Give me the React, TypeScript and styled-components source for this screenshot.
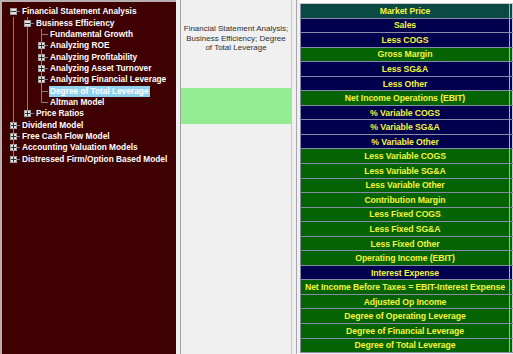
import styled, { createGlobalStyle } from "styled-components"

type Node = { level: number; label: string; box?: "plus" | "minus"; selected?: boolean }

const tree: Node[] = [
    { level: 0, label: "Financial Statement Analysis", box: "minus" },
    { level: 1, label: "Business Efficiency", box: "minus" },
    { level: 2, label: "Fundamental Growth" },
    { level: 2, label: "Analyzing ROE", box: "plus" },
    { level: 2, label: "Analyzing Profitability", box: "plus" },
    { level: 2, label: "Analyzing Asset Turnover", box: "plus" },
    { level: 2, label: "Analyzing Financial Leverage", box: "plus" },
    { level: 2, label: "Degree of Total Leverage", selected: true },
    { level: 2, label: "Altman Model" },
    { level: 1, label: "Price Ratios", box: "plus" },
    { level: 0, label: "Dividend Model", box: "plus" },
    { level: 0, label: "Free Cash Flow Model", box: "plus" },
    { level: 0, label: "Accounting Valuation Models", box: "plus" },
    { level: 0, label: "Distressed Firm/Option Based Model", box: "plus" },
]

type Tone = "teal" | "navy" | "green"

const rows: { label: string; tone: Tone }[] = [
    { label: "Market Price", tone: "teal" },
    { label: "Sales", tone: "navy" },
    { label: "Less COGS", tone: "navy" },
    { label: "Gross Margin", tone: "green" },
    { label: "Less SG&A", tone: "navy" },
    { label: "Less Other", tone: "navy" },
    { label: "Net Income Operations (EBIT)", tone: "green" },
    { label: "% Variable COGS", tone: "navy" },
    { label: "% Variable SG&A", tone: "navy" },
    { label: "% Variable Other", tone: "navy" },
    { label: "Less Variable COGS", tone: "green" },
    { label: "Less Variable SG&A", tone: "green" },
    { label: "Less Variable Other", tone: "green" },
    { label: "Contribution Margin", tone: "green" },
    { label: "Less Fixed COGS", tone: "green" },
    { label: "Less Fixed SG&A", tone: "green" },
    { label: "Less Fixed Other", tone: "green" },
    { label: "Operating Income (EBIT)", tone: "green" },
    { label: "Interest Expense", tone: "navy" },
    { label: "Net Income Before Taxes = EBIT-Interest Expense", tone: "green" },
    { label: "Adjusted Op Income", tone: "green" },
    { label: "Degree of Operating Leverage", tone: "green" },
    { label: "Degree of Financial Leverage", tone: "green" },
    { label: "Degree of Total Leverage", tone: "green" },
]

const toneBg: Record<Tone, string> = {
    teal: "#0b4a42",
    navy: "#00004e",
    green: "#046404",
}

// does the node at index i have a later sibling?
const hasNext = (i: number) => {
    const lvl = tree[i].level
    for (let j = i + 1; j < tree.length; j++) {
        if (tree[j].level < lvl) return false
        if (tree[j].level === lvl) return true
    }
    return false
}

const guideFor = (i: number, level: number) => {
    for (let j = i - 1; j >= 0; j--) {
        if (tree[j].level === level) return hasNext(j)
    }
    return false
}

const GlobalStyle = createGlobalStyle`
  html, body { margin: 0; padding: 0; background: #f0f0f0; }
  * { box-sizing: border-box; }
`

const Window = styled.div`
display: flex;
width: 513px;
height: 354px;
overflow: hidden;
background: #f0f0f0;
`

const TreePanel = styled.div`
width: 176px;
flex: none;
background: #3e0000;
border-top: 2px solid #b8b0b0;
border-left: 2px solid #b8b0b0;
padding: 4px 0 0 4px;
font-family: "Liberation Sans", Arial, sans-serif;
font-weight: bold;
font-size: 8.3px;
color: #ffffff;
`

const TreeRow = styled.div`
display: flex;
align-items: center;
height: 11.35px;
`

const lineColor = "#8a7a7a"

const Guide = styled.span<{ $line: boolean }>`
width: 14px;
height: 100%;
flex: none;
background: ${(p) => (p.$line ? `linear-gradient(${lineColor}, ${lineColor}) no-repeat 7px 0 / 1px 100%` : "none")};
`

const Joint = styled.span<{ $first: boolean; $next: boolean }>`
width: 14px;
height: 100%;
flex: none;
display: flex;
align-items: center;
justify-content: center;
background:
  linear-gradient(${lineColor}, ${lineColor}) no-repeat 7px 50% / 7px 1px,
  linear-gradient(${lineColor}, ${lineColor}) no-repeat 7px ${(p) => (p.$first ? "50%" : "0")} / 1px ${(p) => (p.$first ? (p.$next ? "50%" : "0") : p.$next ? "100%" : "50%")};
`

const Expander = styled.span`
width: 7px;
height: 7px;
flex: none;
display: flex;
background: #e4e4e4;
border: 1px solid #a0a0a0;
margin-left: 1px;
`

const Label = styled.span<{ $selected?: boolean }>`
margin-left: 1px;
padding: 0 1px;
line-height: 11px;
white-space: nowrap;
background: ${(p) => (p.$selected ? "#8fd2f0" : "transparent")};
`

const Middle = styled.div`
width: 121px;
flex: none;
display: flex;
padding: 0 4px 0 4px;
border-right: 1px solid #a8a8a8;
`

const Frame = styled.div`
flex: 1;
display: flex;
flex-direction: column;
border-left: 1px solid #a0a0a0;
border-right: 1px solid #c8c8c8;
padding-top: 2px;
`

const Caption = styled.div`
height: 86px;
padding: 22px 2px 0;
text-align: center;
font-family: "Liberation Sans", Arial, sans-serif;
font-size: 8px;
line-height: 9.6px;
color: #2e2e2e;
`

const Swatch = styled.div`
height: 36px;
background: #92ec92;
`

const Grid = styled.div`
flex: 1;
display: flex;
flex-direction: column;
padding-left: 3px;
`

const TopStrip = styled.div`
height: 4px;
background: #ffffff;
border-bottom: 1px solid #c8c8d8;
`

const Row = styled.div`
display: flex;
height: 14.56px;
border-bottom: 1px solid #8a8aa8;
`

const Cell = styled.div<{ $tone: Tone }>`
flex: 1;
display: flex;
align-items: center;
justify-content: center;
background: ${(p) => toneBg[p.$tone]};
border-left: 1px solid #8a8aa8;
border-right: 1px solid #b8a8c8;
font-family: "Liberation Sans", Arial, sans-serif;
font-weight: bold;
font-size: 8.7px;
color: #f4f43a;
white-space: nowrap;
letter-spacing: -0.1px;
`

const Stub = styled.div<{ $tone: Tone }>`
width: 3px;
flex: none;
background: ${(p) => toneBg[p.$tone]};
border-right: 1px solid #c8c8d8;
`

const Sign = ({ kind }: { kind: "plus" | "minus" }) => (
    <svg width="5" height="5" viewBox="0 0 5 5">
        <rect x="0" y="2" width="5" height="1" fill="#303030" />
        {kind === "plus" && <rect x="2" y="0" width="1" height="5" fill="#303030" />}
    </svg>
)

export default function App() {
    return (
        <Window>
            <GlobalStyle />
            <TreePanel>
                {tree.map((node, i) => (
                    <TreeRow key={i}>
                        {Array.from({ length: node.level }, (_, k) => (
                            <Guide key={k} $line={guideFor(i, k)} />
                        ))}
                        <Joint $first={i === 0} $next={hasNext(i)}>
                            {node.box && (
                                <Expander>
                                    <Sign kind={node.box} />
                                </Expander>
                            )}
                        </Joint>
                        <Label $selected={node.selected}>{node.label}</Label>
                    </TreeRow>
                ))}
            </TreePanel>
            <Middle>
                <Frame>
                    <Caption>Financial Statement Analysis; Business Efficiency; Degree of Total Leverage</Caption>
                    <Swatch />
                </Frame>
            </Middle>
            <Grid>
                <TopStrip />
                {rows.map((row) => (
                    <Row key={row.label}>
                        <Cell $tone={row.tone}>{row.label}</Cell>
                        <Stub $tone={row.tone} />
                    </Row>
                ))}
            </Grid>
        </Window>
    )
}
